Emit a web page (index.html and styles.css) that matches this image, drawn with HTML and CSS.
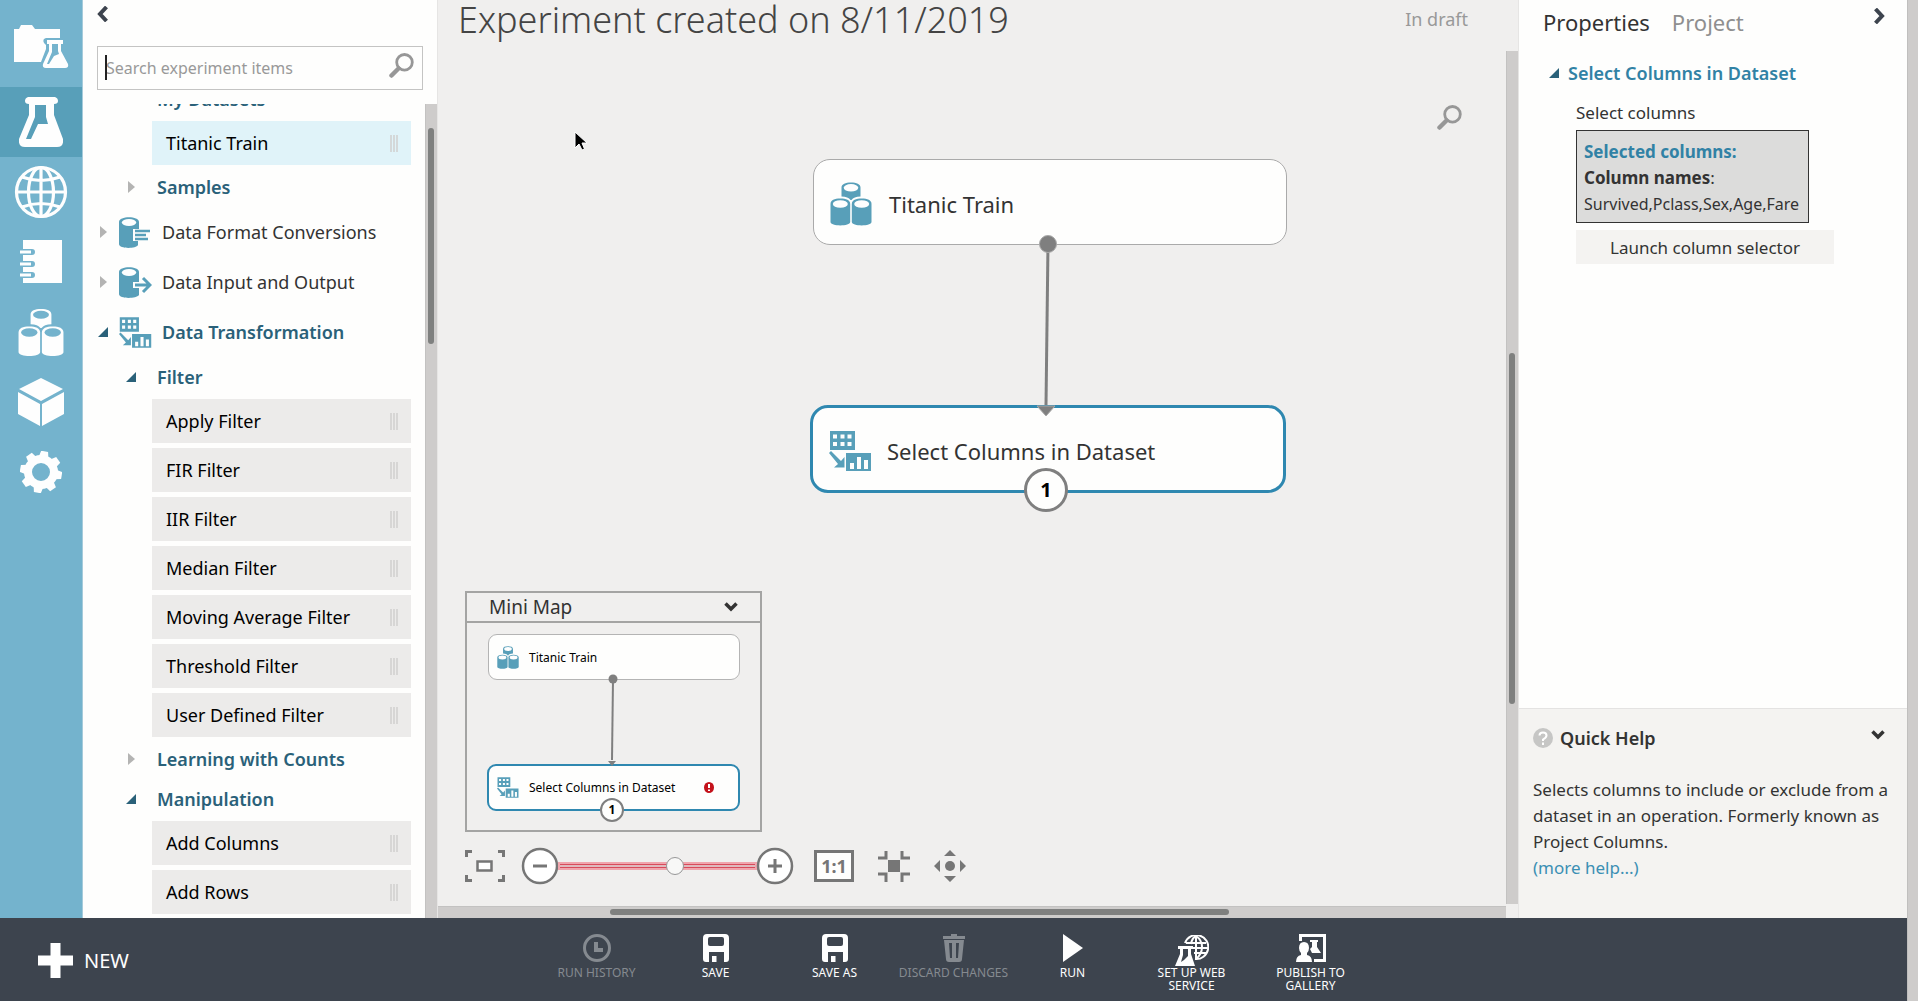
FILE: index.html
```html
<!DOCTYPE html>
<html lang="en">
<head>
<meta charset="utf-8">
<title>Experiment created on 8/11/2019</title>
<link rel="stylesheet" href="styles.css">
</head>
<body>
<svg class="defs" aria-hidden="true">
  <symbol id="cylinders" viewBox="0 0 42 44">
    <path d="M11.500 5.500C11.500 2 15.500 0.500 21 0.500S30.500 2 30.500 5.500V14.500C26 14.500 23 16 21.500 18H20.500C19 16 16 14.500 11.500 14.500Z" fill="currentColor"/>
    <ellipse cx="21" cy="5.800" rx="7.300" ry="3.700" class="hole"/>
    <path d="M0.500 22C0.500 18 4.500 16.500 10.300 16.500S20.200 18 20.200 22V40C20.200 44.500 0.500 44.500 0.500 40Z" fill="currentColor"/>
    <ellipse cx="10.300" cy="22" rx="7.500" ry="3.800" class="hole"/>
    <path d="M21.800 22C21.800 18 26 16.500 31.700 16.500S41.500 18 41.500 22V40C41.500 44.500 21.800 44.500 21.800 40Z" fill="currentColor"/>
    <ellipse cx="31.700" cy="22" rx="7.500" ry="3.800" class="hole"/>
  </symbol>
  <symbol id="transform" viewBox="0 0 43 40">
    <path fill="currentColor" fill-rule="evenodd" d="M1 0H26V19H1ZM4 3.500V7.500H8V3.500ZM11.500 3.500V7.500H15.500V3.500ZM18.500 3.500V7.500H22.500V3.500ZM4 11V15H8V11ZM11.500 11V15H15.500V11ZM18.500 11V15H22.500V11Z"/>
    <path fill="currentColor" d="M0 22L2 20L12 30L15.500 26V36.500H5L9 33Z"/>
    <path fill="currentColor" fill-rule="evenodd" d="M17 22H42V40H17ZM21 32V38H25V32ZM28 26V38H32V26ZM35 29V38H39V29Z"/>
  </symbol>
  <symbol id="flask" viewBox="0 0 44 50">
    <path fill="currentColor" fill-rule="evenodd" d="M9 0H36Q39 1 39 4Q39 7 35 7V18L44 42Q45 50 38 50H6Q-1 50 0 42L10 18V7Q6 7 6 4Q6 1 9 0ZM16 8V20L7 42H12L19 27H29L27 20V8Z"/>
  </symbol>
  <symbol id="globe" viewBox="0 0 54 54">
    <g fill="none" stroke="currentColor" stroke-width="3.200">
      <circle cx="27" cy="27" r="24.500"/><ellipse cx="27" cy="27" rx="12.500" ry="24.500"/>
      <path d="M27 2V52M2 27H52M8 12Q27 19 46 12M8 42Q27 35 46 42"/>
    </g>
  </symbol>
  <symbol id="search" viewBox="0 0 25 25">
    <circle cx="15.500" cy="9.300" r="7.800" fill="none" stroke="currentColor" stroke-width="2.800"/>
    <path d="M9.500 15.500L2.500 22.500" stroke="currentColor" stroke-width="4.500" stroke-linecap="round"/>
  </symbol>
  <symbol id="closed" viewBox="0 0 8 12"><path d="M0 0L7 6L0 12Z" fill="currentColor"/></symbol>
  <symbol id="open" viewBox="0 0 10 10"><path d="M10 0V10H0Z" fill="currentColor"/></symbol>
  <symbol id="chevron" viewBox="0 0 12 16"><path d="M9.500 1L3 8L9.500 15" fill="none" stroke="currentColor" stroke-width="4"/></symbol>
  <symbol id="down" viewBox="0 0 14 10"><path d="M1.500 1.500L7 7L12.500 1.500" fill="none" stroke="currentColor" stroke-width="3.500"/></symbol>
  <symbol id="grip" viewBox="0 0 8 17"><path d="M1 0V17M4 0V17M7 0V17" stroke="currentColor" stroke-width="1.500"/></symbol>
  <symbol id="disk" viewBox="0 0 26 28">
    <path fill="currentColor" fill-rule="evenodd" d="M4 0H22Q26 0 26 4V25Q26 28 23 28H21V18H6V28H3Q0 28 0 25V4Q0 0 4 0ZM7 3Q5 3 5 5V10Q5 12 7 12H19Q21 12 21 10V5Q21 3 19 3Z"/>
    <path fill="currentColor" d="M9 22H13.500V28H9Z"/>
  </symbol>
</svg>

<div class="window">
  <div class="app">
    <div class="workspace">
      <nav class="rail" aria-label="Studio sections">
        <a href="#" aria-label="Projects"><svg width="56" height="44" viewBox="0 0 56 44"><path fill="currentColor" d="M1 5H6L8 1H19L22 5H47V14H33Q29 15 31 19L33 21V25L28 38H1Z"/><path fill="currentColor" fill-rule="evenodd" d="M34 16H50V20H48V27L55 40Q56 44 52 44H33Q29 44 30 40L36 27V20H34ZM39 20V28L34 40H36L41 32L46 30L45 27V20Z"/></svg></a>
        <a href="#" class="active" aria-label="Experiments"><svg width="44" height="50"><use href="#flask"/></svg></a>
        <a href="#" aria-label="Web services"><svg width="54" height="54"><use href="#globe"/></svg></a>
        <a href="#" aria-label="Notebooks"><svg width="44" height="44" viewBox="0 0 44 44"><path fill="currentColor" d="M4 0H43V43H4V38H13Q16 38 16 35T13 32H4V27H13Q16 27 16 24T13 21H4V15H13Q16 15 16 12T13 9H4Z"/><path fill="none" stroke="currentColor" stroke-width="3" d="M1 12H12M1 24H12M1 35H12"/></svg></a>
        <a href="#" aria-label="Datasets"><svg width="46" height="49"><use href="#cylinders"/></svg></a>
        <a href="#" aria-label="Trained models"><svg width="46" height="48" viewBox="0 0 46 48"><path fill="currentColor" d="M23 0L45 11L23 23L1 11ZM0 14L22 26V48L0 36ZM46 14L24 26V48L46 36Z"/></svg></a>
        <a href="#" aria-label="Settings"><svg width="42" height="42" viewBox="-21 -21 42 42"><circle r="13" fill="none" stroke="currentColor" stroke-width="8"/><g fill="currentColor"><path id="tooth" d="M-5 -14L-3.500 -21H3.500L5 -14Z" transform="rotate(10)"/><use href="#tooth" transform="rotate(45)"/><use href="#tooth" transform="rotate(90)"/><use href="#tooth" transform="rotate(135)"/><use href="#tooth" transform="rotate(180)"/><use href="#tooth" transform="rotate(225)"/><use href="#tooth" transform="rotate(270)"/><use href="#tooth" transform="rotate(315)"/></g></svg></a>
      </nav>

      <aside class="palette">
        <button class="collapse" aria-label="Collapse palette"><svg width="12" height="16"><use href="#chevron"/></svg></button>
        <div class="search">
          <span class="caret"></span>
          <input type="text" aria-label="Search experiment items" placeholder="Search experiment items">
          <button aria-label="Search"><svg width="25" height="25"><use href="#search"/></svg></button>
        </div>
        <div class="tree-area">
          <div class="tree">
            <div class="branch open"><svg width="10" height="10"><use href="#open"/></svg>My Datasets</div>
            <ul><li class="selected">Titanic Train<svg width="8" height="17"><use href="#grip"/></svg></li></ul>
            <div class="branch"><svg width="8" height="12"><use href="#closed"/></svg>Samples</div>
            <div class="root"><svg class="arrow" width="8" height="12"><use href="#closed"/></svg><svg class="kind" width="33" height="31" viewBox="0 0 33 31"><path fill="currentColor" d="M0 5C0-1.300 20-1.300 20 5V12H14V24H19V28C17 32 0 32 0 27Z"/><ellipse cx="10" cy="5.500" rx="7.200" ry="3.500" class="hole"/><path stroke="currentColor" stroke-width="2.500" d="M16 14H31M16 18H27M16 22H29"/></svg>Data Format Conversions</div>
            <div class="root"><svg class="arrow" width="8" height="12"><use href="#closed"/></svg><svg class="kind" width="33" height="31" viewBox="0 0 33 31"><path fill="currentColor" d="M0 5C0-1.300 20-1.300 20 5V15H14V21H20V28C17 32 0 32 0 27Z"/><ellipse cx="10" cy="5.500" rx="7.200" ry="3.500" class="hole"/><path fill="none" stroke="currentColor" stroke-width="3" d="M16 18H30M24 11L31 18L24 25"/></svg>Data Input and Output</div>
            <div class="root open"><svg class="arrow" width="10" height="10"><use href="#open"/></svg><svg class="kind" width="33" height="31"><use href="#transform"/></svg>Data Transformation</div>
            <div class="branch open"><svg width="10" height="10"><use href="#open"/></svg>Filter</div>
            <ul>
              <li>Apply Filter<svg width="8" height="17"><use href="#grip"/></svg></li>
              <li>FIR Filter<svg width="8" height="17"><use href="#grip"/></svg></li>
              <li>IIR Filter<svg width="8" height="17"><use href="#grip"/></svg></li>
              <li>Median Filter<svg width="8" height="17"><use href="#grip"/></svg></li>
              <li>Moving Average Filter<svg width="8" height="17"><use href="#grip"/></svg></li>
              <li>Threshold Filter<svg width="8" height="17"><use href="#grip"/></svg></li>
              <li>User Defined Filter<svg width="8" height="17"><use href="#grip"/></svg></li>
            </ul>
            <div class="branch"><svg width="8" height="12"><use href="#closed"/></svg>Learning with Counts</div>
            <div class="branch open"><svg width="10" height="10"><use href="#open"/></svg>Manipulation</div>
            <ul>
              <li>Add Columns<svg width="8" height="17"><use href="#grip"/></svg></li>
              <li>Add Rows<svg width="8" height="17"><use href="#grip"/></svg></li>
              <li></li>
            </ul>
          </div>
          <div class="track vertical palette-track"><span></span></div>
        </div>
      </aside>

      <main class="experiment">
        <header><h1>Experiment created on 8/11/2019</h1><span>In draft</span></header>
        <div class="canvas">
          <button class="find" aria-label="Search canvas"><svg width="25" height="25"><use href="#search"/></svg></button>
          <svg class="pointer" width="14" height="21" viewBox="0 0 14 21"><path d="M1 1V17L5 13L8 19L10.500 18L8 12H13Z" fill="#000" stroke="#fff"/></svg>
          <div class="node titanic"><svg width="42" height="44"><use href="#cylinders"/></svg>Titanic Train</div>
          <div class="node columns"><svg width="43" height="40"><use href="#transform"/></svg>Select Columns in Dataset</div>
          <svg class="edge" width="24" height="184" viewBox="0 0 24 184"><path d="M13 9L11 170" stroke="#7f7f7f" stroke-width="3"/><circle cx="13" cy="9" r="8.500" fill="#7f7f7f" stroke="#a9a9a9"/><path d="M2 171H20L11 181Z" fill="#7f7f7f" stroke="#a9a9a9"/></svg>
          <span class="port">1</span>

          <div class="overview">
            <section class="minimap">
              <h2>Mini Map<button aria-label="Hide mini map"><svg width="14" height="10"><use href="#down"/></svg></button></h2>
              <div class="map">
                <div class="mini first"><svg width="22" height="23"><use href="#cylinders"/></svg>Titanic Train</div>
                <div class="mini second"><svg width="22" height="21"><use href="#transform"/></svg>Select Columns in Dataset<svg class="error" width="10" height="11" viewBox="0 0 10 11"><ellipse cx="5" cy="5.500" rx="5" ry="5.500" fill="#c4121b"/><path d="M5 2V6M5 7.500V9" stroke="#fff" stroke-width="2"/></svg></div>
                <svg class="mini-edge" width="12" height="94" viewBox="0 0 12 94"><path d="M7 5L6 86" stroke="#7f7f7f" stroke-width="2"/><circle cx="7" cy="5" r="4.500" fill="#7f7f7f"/><path d="M2 87H10L6 92Z" fill="#7f7f7f"/></svg>
                <span class="mini-port">1</span>
              </div>
            </section>
            <div class="zoombar">
              <button aria-label="Zoom to fit"><svg width="40" height="34" viewBox="0 0 40 34"><path d="M1.500 8V2.500H7M33 2.500H38.500V8M38.500 26V31.500H33M7 31.500H1.500V26" fill="none" stroke="#767676" stroke-width="3"/><path d="M12.500 12.500H26.500V21.500H12.500Z" fill="#fff" stroke="#767676" stroke-width="2.500"/></svg></button>
              <div class="zoom">
                <button aria-label="Zoom out"><svg width="38" height="38" viewBox="0 0 38 38"><circle cx="19" cy="19" r="17" fill="#fff" stroke="#767676" stroke-width="2.500"/><path d="M12 19H26" stroke="#767676" stroke-width="3"/></svg></button>
                <input type="range" min="0" max="100" value="60" aria-label="Zoom">
                <button aria-label="Zoom in"><svg width="38" height="38" viewBox="0 0 38 38"><circle cx="19" cy="19" r="17" fill="#fff" stroke="#767676" stroke-width="2.500"/><path d="M12 19H26M19 12V26" stroke="#767676" stroke-width="3"/></svg></button>
              </div>
              <button class="actual">1:1</button>
              <button aria-label="Zoom to center"><svg width="32" height="32" viewBox="0 0 32 32"><path d="M8 1V8H0M24 1V8H32M0 24H8V32M32 24H24V32" fill="none" stroke="#767676" stroke-width="3"/><path d="M10 10H22V22H10Z" fill="#767676"/></svg></button>
              <button aria-label="Pan"><svg width="32" height="32" viewBox="0 0 32 32"><path d="M16 0L22 6H10ZM16 32L22 26H10ZM0 16L6 10V22ZM32 16L26 10V22Z" fill="#767676"/><circle cx="16" cy="16" r="5" fill="#767676"/></svg></button>
            </div>
          </div>
        </div>
        <div class="track vertical canvas-v"><span></span></div>
        <div class="track canvas-h"><span></span></div>
      </main>

      <aside class="properties">
        <div class="tabs"><button class="current">Properties</button><button>Project</button><button class="expand" aria-label="Collapse properties"><svg width="12" height="16"><use href="#chevron"/></svg></button></div>
        <section class="props">
          <h2><svg width="10" height="10"><use href="#open"/></svg>Select Columns in Dataset</h2>
          <div class="field">
            <h3>Select columns</h3>
            <div class="chosen"><b class="accent">Selected columns:</b><b>Column names<span>:</span></b><span>Survived,Pclass,Sex,Age,Fare</span></div>
            <button class="launch">Launch column selector</button>
          </div>
        </section>
        <section class="help">
          <h2><svg width="20" height="20" viewBox="0 0 20 20"><circle cx="10" cy="10" r="10" fill="#c6c6c5"/><path d="M6.500 7.500Q6.500 4.500 10 4.500T13.500 7.500Q13.500 9.500 10 11.500V13M10 14.500V17" fill="none" stroke="#fff" stroke-width="2"/></svg>Quick Help<button aria-label="Hide quick help"><svg width="14" height="10"><use href="#down"/></svg></button></h2>
          <p>Selects columns to include or exclude from a dataset in an operation. Formerly known as Project Columns.<br><a href="#">(more help...)</a></p>
        </section>
      </aside>
    </div>

    <footer class="commands">
      <button class="new"><svg width="35" height="35" viewBox="0 0 35 35"><path d="M12.500 0H22.500V12.500H35V22.500H22.500V35H12.500V22.500H0V12.500H12.500Z" fill="#fff"/></svg>NEW</button>
      <div class="actions">
        <button disabled><svg width="28" height="28" viewBox="0 0 28 28"><circle cx="14" cy="14" r="12.500" fill="none" stroke="currentColor" stroke-width="3"/><path d="M13 8V16H20" fill="none" stroke="currentColor" stroke-width="4"/></svg>RUN HISTORY</button>
        <button><svg width="26" height="28"><use href="#disk"/></svg>SAVE</button>
        <button><svg width="26" height="28"><use href="#disk"/></svg>SAVE AS</button>
        <button disabled><svg width="22" height="28" viewBox="0 0 22 28"><path fill="currentColor" fill-rule="evenodd" d="M8 0H14V2H22V5H0V2H8ZM1 6H21L19 25Q19 28 16 28H6Q3 28 3 25ZM6 9L7 24H9V9ZM13 9V24H15L16 9Z"/></svg>DISCARD CHANGES</button>
        <button><svg width="20" height="28" viewBox="0 0 20 28"><path fill="currentColor" d="M0 0L20 14L0 28Z"/></svg>RUN</button>
        <button class="low"><svg width="34" height="31" viewBox="0 0 34 31"><g fill="none" stroke="currentColor" stroke-width="2"><path d="M10 8A12 12 0 1 1 20 24"/><path d="M16 9Q17 3 21 1Q27 5 27 12T21 24M21 1V24M11 8H31M17 13H33M19 18H32"/></g><path d="M3 11H18V14H16V19L20 31H0L5 19V14H3Z" fill="currentColor"/><path d="M8 14H13V21L9 25L6 27L8 20Z" fill="#3d444e"/></svg>SET UP WEB SERVICE</button>
        <button><svg width="30" height="28" viewBox="0 0 30 28"><path d="M4.500 7V1.500H28.500V26.500H18" fill="none" stroke="currentColor" stroke-width="3"/><path d="M14 6H22V8H21V13L25 19H16L14 15L16 13V8H14Z" fill="currentColor"/><path d="M3 14Q3 8 8 8T13 14Q13 17 11 19V21Q16 22 16 28H0Q0 22 5 21V19Q3 17 3 14Z" fill="currentColor"/></svg>PUBLISH TO GALLERY</button>
      </div>
    </footer>
  </div>
  <div class="page-track"></div>
</div>
</body>
</html>
```
FILE: styles.css
```css
* { box-sizing: border-box; }
body { margin: 0; font-family: "Noto Sans", "Open Sans", sans-serif; font-size: 16px; color: #333; }
button { border: 0; padding: 0; background: none; font: inherit; color: inherit; display: flex; }
svg { display: block; flex: none; }
h1, h2, h3, p, ul { margin: 0; padding: 0; font-weight: 400; }
.defs { display: none; }
.hole { fill: var(--hole, #fefefe); }

.window { display: flex; height: 100vh; }
.app { flex: 1; min-width: 0; display: flex; flex-direction: column; }
.page-track { width: 11px; background: #cecccb; border-left: 1px solid #c0bfbe; }
.workspace { flex: 1; min-height: 0; display: flex; }

/* scroll tracks */
.track { display: flex; background: #cecccb; border-top: 1px solid #c3c2c1; padding: 2px 0 3px; }
.track.vertical { flex-direction: column; border-top: 0; border-left: 1px solid #c3c2c1; padding: 0 3px 0 2px; }
.track span { background: #7f807f; border-radius: 3px; }
.track::before, .track::after { content: ""; }

/* section rail */
.rail { --hole: #74b3cd; width: 83px; padding-top: 4px; background: #74b3cd; border-right: 1px solid #a5cbdb; color: #fefefe; }
.rail a { display: flex; align-items: center; justify-content: center; height: 70px; padding-right: 1px; color: inherit; }
.rail a:first-child { height: 83px; }
.rail .active { background: #589fb9; }

/* item palette */
.palette { width: 354px; display: flex; flex-direction: column; background: #fefefd; }
.collapse { margin: 6px 0 24px 14px; color: #3d444e; align-self: flex-start; }
.search { position: relative; display: flex; align-items: center; height: 44px; margin: 0 14px; padding: 0 8px; border: 1px solid #c4c4c3; }
.search input { flex: 1; min-width: 0; border: 0; outline: 0; padding: 0; background: none; font: inherit; color: #333; }
.search input::placeholder { color: #999; opacity: 1; }
.search button { color: #979797; margin-bottom: 6px; }
.caret { position: absolute; left: 7px; top: 8px; width: 2px; height: 25px; background: #222; }
.tree-area { flex: 1; min-height: 0; display: flex; margin-top: 14px; }
.tree { flex: 1; overflow: hidden; font-size: 18px; }
.tree ul { list-style: none; margin: 0 14px 0 69px; padding: 2px 0; display: grid; gap: 5px; color: #000; }
.tree li { height: 44px; padding: 0 13px 0 14px; display: flex; align-items: center; justify-content: space-between; background: #ecebea; }
.tree li svg { color: #cfcfce; }
.tree .selected { background: #e0f3f9; }
.branch { display: flex; align-items: center; height: 40px; padding-left: 45px; gap: 21px; font-weight: 600; color: #2a6179; }
.branch.open { padding-left: 43px; }
.branch svg, .arrow { color: #b4b4b3; }
.branch.open svg, .open .arrow { color: #2a6179; }
.tree > .branch:first-child { margin-top: -25px; }
.root { display: flex; align-items: center; height: 50px; padding-left: 17px; }
.root .arrow { margin-right: 11px; }
.root.open { padding-left: 15px; font-weight: 600; color: #2a6179; }
.kind { margin-right: 10px; color: #589fb9; }
.palette-track { width: 12px; }
.palette-track::before { flex: 24; }
.palette-track span { flex: 216; }
.palette-track::after { flex: 574; }

/* experiment */
.experiment { flex: 1; min-width: 0; display: grid; grid-template: 51px 1fr 12px / 1fr 12px; background: #f0efee; border-right: 1px solid #e6e5e4; border-left: 1px solid #e6e5e4; }
.experiment header { grid-column: 1 / 3; display: flex; justify-content: space-between; align-items: flex-start; padding: 0 50px 0 20px; }
h1 { font-size: 36px; line-height: 40px; font-weight: 300; color: #444; }
.experiment header span { font-size: 18px; line-height: 38px; color: #999; }
.canvas { position: relative; overflow: hidden; }
.canvas-v { margin-bottom: 2px; }
.canvas-v::before { flex: 302; }
.canvas-v span { flex: 351; }
.canvas-v::after { flex: 200; }
.canvas-h::before { flex: 172; }
.canvas-h span { flex: 618; }
.canvas-h::after { flex: 276; }
.find { position: absolute; right: 44px; top: 54px; color: #979797; }
.pointer { position: absolute; left: 136px; top: 80px; }
.node { position: absolute; display: flex; align-items: center; background: #fefefd; font-size: 22px; }
.titanic { left: 375px; top: 108px; width: 474px; height: 86px; padding: 3px 0 0 16px; gap: 17px; border: 1px solid #aaa; border-radius: 17px; }
.columns { left: 372px; top: 354px; width: 476px; height: 88px; padding: 3px 0 0 16px; gap: 15px; border: 3px solid #2f88b0; border-radius: 18px; }
.node svg, .mini svg { color: #589fb9; }
.edge { position: absolute; left: 597px; top: 184px; }
.port { position: absolute; left: 586px; top: 417px; width: 44px; height: 44px; border: 3px solid #7f7f7f; border-radius: 50%; background: #fefefd; color: #000; font-size: 20px; font-weight: 700; line-height: 38px; text-align: center; }

/* overview: mini map and zoom bar */
.overview { position: absolute; left: 27px; bottom: 21px; display: grid; gap: 15px; justify-items: start; }
.minimap { width: 297px; border: 2px solid #a4a4a3; }
.minimap h2 { display: flex; align-items: center; justify-content: space-between; height: 30px; padding: 0 22px; border-bottom: 2px solid #a4a4a3; font-size: 19px; line-height: 28px; }
.map { position: relative; height: 207px; }
.mini { position: absolute; display: flex; align-items: center; gap: 10px; padding-left: 8px; border-radius: 9px; background: #fefefd; color: #000; font-size: 12px; }
.first { left: 21px; top: 11px; width: 252px; height: 46px; border: 1px solid #b4b4b4; }
.second { left: 20px; top: 141px; width: 253px; height: 47px; border: 2px solid #2f88b0; }
.mini .error { position: absolute; right: 24px; }
.mini-edge { position: absolute; left: 139px; top: 51px; }
.mini-port { position: absolute; left: 133px; top: 175px; width: 24px; height: 24px; border: 2px solid #7f7f7f; border-radius: 50%; background: #fefefd; color: #000; font-size: 12px; font-weight: 700; line-height: 20px; text-align: center; }
.zoombar { display: flex; align-items: center; gap: 24px; }
.zoom { display: flex; align-items: center; margin: 0 -4px 0 -8px; }
.zoom input { appearance: none; width: 199px; height: 20px; margin: 0 -1px; background: none; }
.zoom input::-webkit-slider-runnable-track { height: 8px; border: 2px solid #f0a5ad; background: linear-gradient(#d94a5a 1px, #dfb9bd 1px 3px, #d94a5a 3px); }
.zoom input::-webkit-slider-thumb { appearance: none; width: 18px; height: 18px; margin-top: -7px; border: 1px solid #979797; border-radius: 50%; background: #f8f8f7; }
.actual { width: 40px; height: 32px; align-items: center; justify-content: center; border: 3px solid #767676; background: #fefefd; color: #767676; font-size: 18px; font-weight: 700; }

/* properties */
.properties { width: 388px; display: flex; flex-direction: column; background: #fefefd; }
.tabs { display: flex; align-items: flex-start; gap: 22px; padding: 6px 22px 0 24px; font-size: 22px; line-height: 32px; color: #8f8f8f; }
.current { color: #333; }
.expand { margin: 2px 0 0 auto; color: #3d444e; transform: scaleX(-1); }
.props { flex: 1; }
.props h2 { display: flex; align-items: center; gap: 9px; padding: 19px 0 0 30px; font-size: 18px; line-height: 32px; font-weight: 600; color: #3182a5; }
.props h2 svg { color: #2a6179; }
.field { padding: 10px 73px 0 57px; }
h3 { font-size: 17px; line-height: 28px; margin-bottom: 3px; }
.chosen { display: flex; flex-direction: column; width: 233px; height: 93px; padding: 8px 0 0 7px; overflow: hidden; white-space: nowrap; border: 1px solid #333; background: #dcdcdb; line-height: 26px; }
.chosen b { font-size: 17px; }
.chosen b span { font-weight: 400; }
.accent { color: #3182a5; }
.launch { width: 100%; height: 34px; margin-top: 7px; align-items: center; justify-content: center; background: #f4f3f1; font-size: 17px; }
.help { height: 210px; padding: 14px 14px 0; background: #f4f3f1; border-top: 1px solid #e4e3e2; }
.help h2 { display: flex; align-items: center; gap: 7px; font-size: 18px; line-height: 30px; font-weight: 600; }
.help h2 button { margin: 0 8px 6px auto; }
.help p { margin-top: 24px; font-size: 17px; line-height: 26px; }
.help a { color: #3b8fb4; text-decoration: none; }

/* command bar */
.commands { position: relative; display: flex; justify-content: center; height: 83px; background: #3d444e; color: #fefefe; }
.new { position: absolute; left: 38px; top: 24px; align-items: center; gap: 11px; font-size: 20px; line-height: 38px; }
.new svg { margin-bottom: 2px; }
.actions { display: flex; padding-top: 16px; }
.actions button { width: 119px; padding: 0 22px; flex-direction: column; align-items: center; gap: 4px; font-size: 12px; line-height: 13px; color: #fefefe; }
.actions button:disabled { padding: 0; color: #858a90; }
.actions .low { padding-top: 1px; gap: 0; }
```
